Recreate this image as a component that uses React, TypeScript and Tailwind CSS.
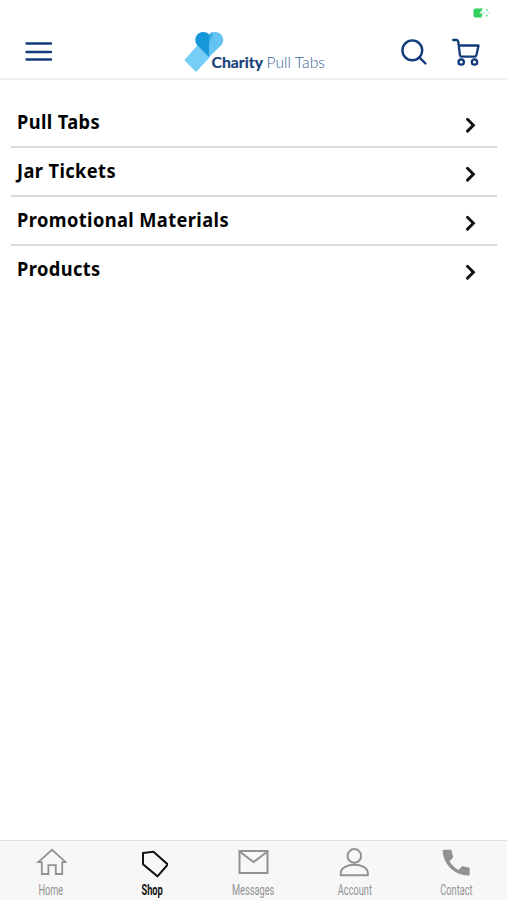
import { useState } from 'react';
import type { ReactNode } from 'react';
import clsx from 'clsx';

const CATEGORIES = ['Pull Tabs', 'Jar Tickets', 'Promotional Materials', 'Products'];

type TabId = 'home' | 'shop' | 'messages' | 'account' | 'contact';

const TABS: { id: TabId; label: string; icon: ReactNode }[] = [
  {
    id: 'home',
    label: 'Home',
    icon: <path d="M3.3 15.2 17 2.800l13.700 12.400h-3.500V27h-6.400v-8.800h-7.400V27H6.800V15.200Z" strokeWidth="1.800" />,
  },
  {
    id: 'shop',
    label: 'Shop',
    icon: <path d="m7 6 10.500-1.300 14.300 12.700L21.500 29.300 7 17.200Z" />,
  },
  {
    id: 'messages',
    label: 'Messages',
    icon: (
      <>
        <path d="M2.500 4h28v22H2.500Z" />
        <path d="m2.500 4.500 14 10.500 14-10.500" />
      </>
    ),
  },
  {
    id: 'account',
    label: 'Account',
    icon: (
      <>
        <circle cx="15.300" cy="8.900" r="6.800" />
        <path d="M1.800 28.300v-2.200c0-11 27-11 27 0v2.200Z" />
      </>
    ),
  },
  {
    id: 'contact',
    label: 'Contact',
    icon: (
      <path
        d="M3.600 2.800h7.200q1 0 1.100 1.500c.1 2 .6 3.700 1.200 5.300q.2.700-.4 1.300L9.500 14.300c2.400 4 5 6.500 9 8.700l3.300-3.400q.6-.5 1.300-.3c1.900.7 3.700 1 5.600 1.100q1 .1 1 1v6.200q0 .900-1.200.900C14.500 28.500 3.300 17.300 2.700 3.800q0-1 .9-1Z"
        fill="currentColor"
        stroke="none"
      />
    ),
  },
];

function StatusBar() {
  return (
    <div className="flex h-[26px] justify-end pt-2 pr-[17px]">
      <svg width="17" height="10" viewBox="0 0 17 10">
        <path d="M2.500 .5h7.500L6.300 5.500h3.200L8.500 9.500h-6Q.5 9.500.5 7.500v-5Q.5 .5 2.500 .5Z" fill="#30cf5b" />
        <path d="M10.500 1 8 5h2.800L9.500 8.500 13.300 4h-2.600Z" fill="#d5f6dd" />
        <path d="m12.500 .5 2.700 1.500-1.200 1.500Zm.7 8.700 2-2-2-1Z" fill="#66dd86" />
        <path d="M16 3.800v2" stroke="#a5eab7" />
      </svg>
    </div>
  );
}

function Logo() {
  return (
    <div className="relative h-[44px] w-[142px]">
      <svg width="41" height="42" viewBox="0 0 41 42" className="absolute top-0 left-0">
        <path d="M14 12.500 .3 28.300 12 40 26 25Z" fill="#76cdf6" />
        <path d="M25 2.500C21.500-1 15-.7 12.500 3.700c-2 3.500-1.500 7 .8 9.600L25 25Z" fill="#1697da" />
        <path d="M25 2.500C28.500-1 35.500-.7 38 3.700c2 3.500 1.500 7-.8 9.600L25 25Z" fill="#64c3f0" />
        <path d="M25 2.500C26.500 1 28 .300 29.500 .2L25 12Z" fill="#3aade6" />
      </svg>
      <svg
        width="120"
        height="26"
        viewBox="0 0 120 26"
        className="absolute top-[20px] left-[27px] overflow-visible font-['Lato','Open_Sans',sans-serif]"
      >
        <text x=".5" y="16.300" fontSize="15" fontWeight="700" textLength="51.500" lengthAdjust="spacingAndGlyphs" fill="#164078" stroke="#164078" strokeWidth=".2">
          Charity
        </text>
        <text x="55.500" y="16.300" fontSize="15" fontWeight="300" textLength="58.500" lengthAdjust="spacingAndGlyphs" fill="#36639a">
          Pull Tabs
        </text>
      </svg>
    </div>
  );
}

function Header() {
  return (
    <header className="flex h-[54px] items-start border-b-2 border-[#ededed] text-[#123b7c]">
      <button className="mt-[15px] ml-[25px]" aria-label="Menu">
        <svg width="28" height="22" viewBox="0 0 28 22" stroke="currentColor" strokeWidth="2.400" strokeLinecap="round">
          <path d="M1.500 2.500h24.500M1.500 11h24.500M1.500 18.500h24.500" />
        </svg>
      </button>
      <div className="mt-[6px] ml-[131px]">
        <Logo />
      </div>
      <button className="mt-[12px] ml-[74px]" aria-label="Search">
        <svg width="28" height="28" viewBox="0 0 28 28" fill="none" stroke="currentColor" strokeWidth="2.400" strokeLinecap="round">
          <circle cx="12.300" cy="12.300" r="9.900" />
          <path d="m19.300 19.300 6.200 6.200" />
        </svg>
      </button>
      <button className="mt-[12px] ml-[24px]" aria-label="Cart">
        <svg width="28" height="28" viewBox="0 0 28 28" fill="none" stroke="currentColor" strokeWidth="2.300" strokeLinecap="round" strokeLinejoin="round">
          <path d="M1.200 2H4.500Q6 2 6.200 3.500L8 17.300Q8.200 18.700 9.500 18.700h13.300q1.200 0 1.500-1.200L26.600 7.500H6.800" />
          <circle cx="9.200" cy="24" r="2.700" />
          <circle cx="22.500" cy="24" r="2.700" />
        </svg>
      </button>
    </header>
  );
}

function CategoryList() {
  return (
    <ul className="mt-[19px] mr-[10px] ml-[11px] font-['Noto_Sans','Open_Sans',sans-serif]">
      {CATEGORIES.map((name) => (
        <li key={name} className="flex h-[49px] items-start justify-between border-b-2 border-[#dadada] pr-[20px] pl-[6px] last:border-b-0">
          <span className="origin-left scale-x-[0.96] pt-[9px] text-[19px] leading-[28px] font-bold tracking-[0.42px] whitespace-nowrap text-black">
            {name}
          </span>
          <svg width="12" height="16" viewBox="0 0 12 16" className="mt-[18px]" fill="none" stroke="#111" strokeWidth="2.900" strokeLinecap="round">
            <path d="m2.500 2.300 5.900 5.900-5.900 5.900" />
          </svg>
        </li>
      ))}
    </ul>
  );
}

function TabBar({ active, onSelect }: { active: TabId; onSelect: (id: TabId) => void }) {
  return (
    <nav className="mt-auto grid h-[60px] grid-cols-5 border-t border-[#dedede] bg-[#f7f7f7]">
      {TABS.map((tab) => (
        <button
          key={tab.id}
          onClick={() => onSelect(tab.id)}
          className={clsx('flex flex-col items-center pt-[6px]', active === tab.id ? 'text-[#111]' : 'text-[#929292]')}
        >
          <svg width="32" height="32" viewBox="0 0 32 32" fill="none" stroke="currentColor" strokeWidth="2">
            {tab.icon}
          </svg>
          <span
            className={clsx(
              "mt-[3px] scale-x-[0.66] font-['Roboto',sans-serif] text-[14px] leading-[16px] whitespace-nowrap",
              active === tab.id && 'font-bold'
            )}
          >
            {tab.label}
          </span>
        </button>
      ))}
    </nav>
  );
}

function App() {
  const [activeTab, setActiveTab] = useState<TabId>('shop');

  return (
    <div className="flex h-screen min-h-[900px] w-full flex-col bg-white">
      <StatusBar />
      <Header />
      <main>
        <CategoryList />
      </main>
      <TabBar active={activeTab} onSelect={setActiveTab} />
    </div>
  );
}

export default App;
